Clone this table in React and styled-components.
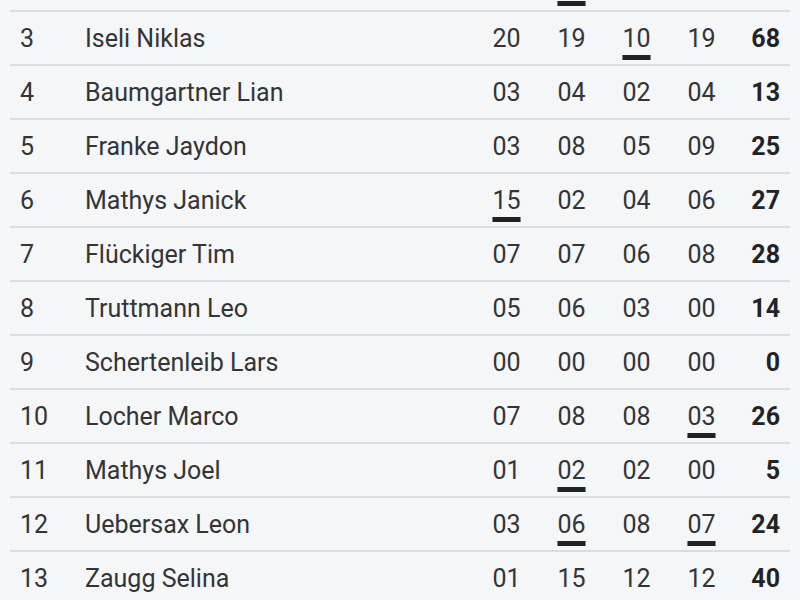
import React from 'react'
import styled, { createGlobalStyle } from 'styled-components';

const GlobalStyle = createGlobalStyle`
  html, body {
    margin: 0;
    padding: 0;
    background: #f5f6f8;
    font-family: Roboto, "Liberation Sans", sans-serif;
    overflow: hidden;
  }
`

const Table = styled.div`
    margin: -42px 10px 0 10px;
`

const Row = styled.div`
    display: grid;
    grid-template-columns: 65px 1fr 65px 65px 65px 65px 46px;
    align-items: center;
    height: 54px;
    box-sizing: border-box;
    padding: 0 10px;
    border-bottom: 2px solid #dcdde1;
    font-size: 25px;
    color: #333436;
`

const Rank = styled.div`
    white-space: nowrap;
`

const Name = styled.div`
    white-space: nowrap;
    overflow: hidden;
`

const Score = styled.div`
    text-align: center;
    text-decoration: ${props => props.marked ? 'underline' : 'none'};
    text-decoration-color: #222325;
    text-decoration-thickness: 5px;
    text-underline-offset: 8px;
`

const Total = styled.div`
    text-align: right;
    font-weight: 700;
    color: #222325;
`

const players = [
    { rank: 2, name: 'Gerber Noah', scores: ['05', '12', '09', '11'], marked: [1], total: 37 },
    { rank: 3, name: 'Iseli Niklas', scores: ['20', '19', '10', '19'], marked: [2], total: 68 },
    { rank: 4, name: 'Baumgartner Lian', scores: ['03', '04', '02', '04'], marked: [], total: 13 },
    { rank: 5, name: 'Franke Jaydon', scores: ['03', '08', '05', '09'], marked: [], total: 25 },
    { rank: 6, name: 'Mathys Janick', scores: ['15', '02', '04', '06'], marked: [0], total: 27 },
    { rank: 7, name: 'Flückiger Tim', scores: ['07', '07', '06', '08'], marked: [], total: 28 },
    { rank: 8, name: 'Truttmann Leo', scores: ['05', '06', '03', '00'], marked: [], total: 14 },
    { rank: 9, name: 'Schertenleib Lars', scores: ['00', '00', '00', '00'], marked: [], total: 0 },
    { rank: 10, name: 'Locher Marco', scores: ['07', '08', '08', '03'], marked: [3], total: 26 },
    { rank: 11, name: 'Mathys Joel', scores: ['01', '02', '02', '00'], marked: [1], total: 5 },
    { rank: 12, name: 'Uebersax Leon', scores: ['03', '06', '08', '07'], marked: [1, 3], total: 24 },
    { rank: 13, name: 'Zaugg Selina', scores: ['01', '15', '12', '12'], marked: [], total: 40 },
]

const App = () => {
  return (
    <>
      <GlobalStyle />
      <Table>
        {players.map(player => (
            <Row key={player.rank}>
                <Rank>{player.rank}</Rank>
                <Name>{player.name}</Name>
                {player.scores.map((score, i) => (
                    <Score key={i} marked={player.marked.includes(i)}>{score}</Score>
                ))}
                <Total>{player.total}</Total>
            </Row>
        ))}
      </Table>
    </>
  )
}

export default App
